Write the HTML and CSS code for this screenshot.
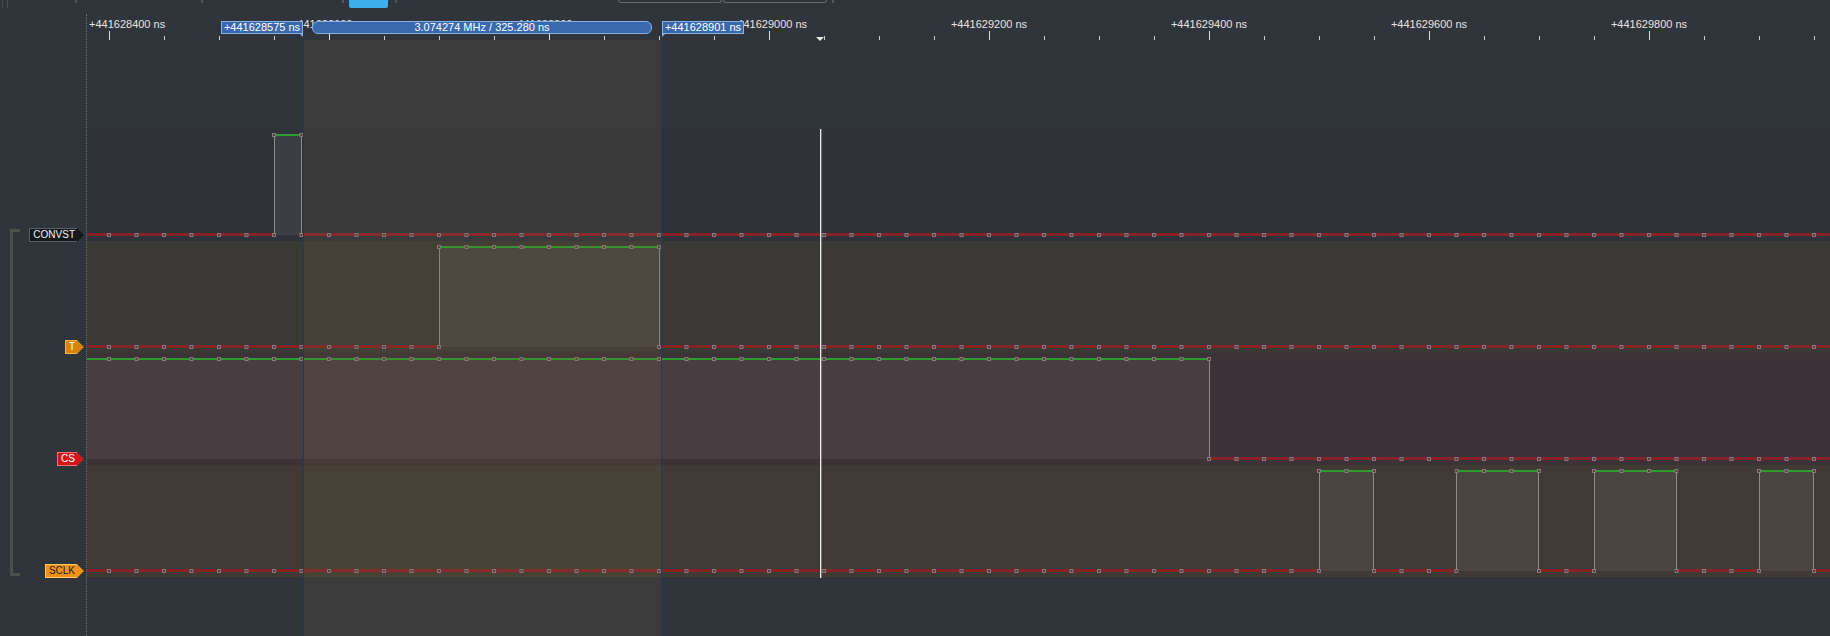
FILE: index.html
```html
<!DOCTYPE html>
<html lang="en">

<head>
    <meta charset="UTF-8">
    <meta name="viewport" content="width=device-width, initial-scale=1.0">
    <title>Logic Analyzer</title>
    <link rel="stylesheet" href="styles.css">
</head>

<body>
    <!-- shared sample-point marker -->
    <svg class="defs" width="0" height="0" aria-hidden="true">
        <defs>
            <pattern id="dots" patternUnits="userSpaceOnUse" x="20" y="4" width="27.5" height="4">
                <rect x="0.5" y="0.5" width="3" height="3" fill="#5a3a3c" stroke="#877b7b" />
            </pattern>
        </defs>
    </svg>

    <!-- bottom edge of the toolbar -->
    <div class="toolbar">
        <span class="grip"></span>
        <span class="stub s1"></span>
        <span class="stub s2"></span>
        <span class="stub s3"></span>
        <span class="tool-btn"></span>
        <span class="stub s4"></span>
        <span class="frame f1"></span>
        <span class="frame f2"></span>
        <span class="stub s5"></span>
    </div>

    <div class="viewer">
        <!-- channel names -->
        <div class="sidebar">
            <div class="bracket"></div>
            <div class="tags">
                <div class="tag-slot"><span class="tag tag-convst">CONVST</span></div>
                <div class="tag-slot"><span class="tag tag-t">T</span></div>
                <div class="tag-slot"><span class="tag tag-cs">CS</span></div>
                <div class="tag-slot"><span class="tag tag-sclk">SCLK</span></div>
            </div>
        </div>

        <div class="plot">
            <!-- time ruler -->
            <div class="ruler">
                <div class="ruler-labels">
                    <span class="tick-label first">+441628400 ns</span>
                    <span class="tick-label">+441628600 ns</span>
                    <span class="tick-label">+441628800 ns</span>
                    <span class="tick-label">+441629000 ns</span>
                    <span class="tick-label">+441629200 ns</span>
                    <span class="tick-label">+441629400 ns</span>
                    <span class="tick-label">+441629600 ns</span>
                    <span class="tick-label">+441629800 ns</span>
                    <span class="tick-label">+441630000 ns</span>
                </div>
                <div class="ticks"></div>

                <div class="marker marker-a">+441628575 ns</div>
                <div class="marker-span">3.074274 MHz / 325.280 ns</div>
                <div class="marker marker-b">+441628901 ns</div>
                <div class="cursor-head"></div>
            </div>

            <!-- traces -->
            <div class="lanes">
                <div class="lane lane-convst">
                    <svg width="1743" height="112" viewBox="0 0 1743 112">
                        <rect class="hi-area" x="187" y="6" width="27.5" height="100" />
                        <rect class="lo" x="0" y="104" width="187" height="3" />
                        <rect class="lo" x="214.5" y="104" width="1528.5" height="3" />
                        <rect class="hi" x="187" y="5" width="27.5" height="2" />
                        <path class="edge" d="M187.5 6V106M214.5 6V106" />
                        <rect fill="url(#dots)" x="-2" y="104" width="191" height="4" />
                        <rect fill="url(#dots)" x="212" y="104" width="1531" height="4" />
                        <rect fill="url(#dots)" x="185" y="4" width="32" height="4" />
                    </svg>
                </div>
                <div class="lane lane-t">
                    <svg width="1743" height="112" viewBox="0 0 1743 112">
                        <rect class="hi-area" x="352" y="6" width="220" height="100" />
                        <rect class="lo" x="0" y="104" width="352" height="3" />
                        <rect class="lo" x="572" y="104" width="1171" height="3" />
                        <rect class="hi" x="352" y="5" width="220" height="2" />
                        <path class="edge" d="M352.5 6V106M572.5 6V106" />
                        <rect fill="url(#dots)" x="-2" y="104" width="356" height="4" />
                        <rect fill="url(#dots)" x="570" y="104" width="1173" height="4" />
                        <rect fill="url(#dots)" x="350" y="4" width="224" height="4" />
                    </svg>
                </div>
                <div class="lane lane-cs">
                    <svg width="1743" height="112" viewBox="0 0 1743 112">
                        <rect class="hi-area" x="0" y="6" width="1122" height="100" />
                        <rect class="hi" x="0" y="5" width="1122" height="2" />
                        <rect class="lo" x="1122" y="104" width="621" height="3" />
                        <path class="edge" d="M1122.5 6V106" />
                        <rect fill="url(#dots)" x="-2" y="4" width="1126" height="4" />
                        <rect fill="url(#dots)" x="1120" y="104" width="623" height="4" />
                    </svg>
                </div>
                <div class="lane lane-sclk">
                    <svg width="1743" height="112" viewBox="0 0 1743 112">
                        <rect class="hi-area" x="1232" y="6" width="55" height="100" />
                        <rect class="hi-area" x="1369.5" y="6" width="82.5" height="100" />
                        <rect class="hi-area" x="1507" y="6" width="82.5" height="100" />
                        <rect class="hi-area" x="1672" y="6" width="55" height="100" />
                        <rect class="lo" x="0" y="104" width="1232" height="3" />
                        <rect class="lo" x="1287" y="104" width="82.5" height="3" />
                        <rect class="lo" x="1452" y="104" width="55" height="3" />
                        <rect class="lo" x="1589.5" y="104" width="82.5" height="3" />
                        <rect class="lo" x="1727" y="104" width="16" height="3" />
                        <rect class="hi" x="1232" y="5" width="55" height="2" />
                        <rect class="hi" x="1369.5" y="5" width="82.5" height="2" />
                        <rect class="hi" x="1507" y="5" width="82.5" height="2" />
                        <rect class="hi" x="1672" y="5" width="55" height="2" />
                        <path class="edge" d="M1232.5 6V106M1286.5 6V106M1369.5 6V106M1451.5 6V106M1507.5 6V106M1589.5 6V106M1672.5 6V106M1726.5 6V106" />
                        <rect fill="url(#dots)" x="-2" y="104" width="1236" height="4" />
                        <rect fill="url(#dots)" x="1285" y="104" width="86.5" height="4" />
                        <rect fill="url(#dots)" x="1450" y="104" width="59" height="4" />
                        <rect fill="url(#dots)" x="1587.5" y="104" width="86.5" height="4" />
                        <rect fill="url(#dots)" x="1725" y="104" width="18" height="4" />
                        <rect fill="url(#dots)" x="1230" y="4" width="59" height="4" />
                        <rect fill="url(#dots)" x="1367.5" y="4" width="86.5" height="4" />
                        <rect fill="url(#dots)" x="1505" y="4" width="86.5" height="4" />
                        <rect fill="url(#dots)" x="1670" y="4" width="59" height="4" />
                    </svg>
                </div>
            </div>

            <!-- time selection between the two markers, and the cursor -->
            <div class="selection"></div>
            <div class="cursor"></div>
        </div>
    </div>
</body>

</html>
```

FILE: styles.css
```css
* {
    margin: 0;
    padding: 0;
}

html,
body {
    width: 1830px;
    height: 636px;
    overflow: hidden;
}

body {
    background: #30343b;
    font-family: "Liberation Sans", Arial, sans-serif;
    color: #e2e2e2;
}

.defs {
    display: block;
}

/* 工具栏底边 */
.toolbar {
    height: 14px;
    display: flex;
    align-items: flex-start;
}

.grip {
    width: 6px;
    height: 8px;
    margin-left: 2px;
    box-sizing: border-box;
    border-left: 1px solid #4b4f55;
    border-right: 1px solid #4b4f55;
}

.stub {
    width: 2px;
    height: 3px;
    background: #52565c;
}

.s1 { margin-left: 67px; }
.s2 { margin-left: 124px; }
.s3 { margin-left: 139px; }
.s4 { margin-left: 7px; }
.s5 { margin-left: 5px; }

.tool-btn {
    width: 39px;
    height: 8px;
    margin-left: 5px;
    background: #3daee9;
    border-radius: 0 0 2px 2px;
}

.frame {
    width: 104px;
    height: 3px;
    box-sizing: border-box;
    border: 1px solid #65686d;
    border-top: 0;
    border-radius: 0 0 3px 3px;
}

.f1 { margin-left: 221px; }
.f2 { margin-left: 1px; }

.viewer {
    display: flex;
    height: 622px;
}

/* 通道名称 */
.sidebar {
    width: 86px;
    flex: none;
    display: flex;
    padding-top: 115px;
    box-sizing: border-box;
}

.bracket {
    flex: none;
    width: 10px;
    height: 347px;
    margin: 100px 0 0 10px;
    box-sizing: border-box;
    border: 3px solid #4c504c;
    border-right: 0;
}

.tags {
    flex: 1;
    display: flex;
    flex-direction: column;
    align-items: flex-end;
    padding-right: 9px;
}

.tag-slot {
    height: 112px;
    display: flex;
    align-items: flex-end;
}

.tag {
    position: relative;
    height: 14px;
    box-sizing: border-box;
    margin-bottom: -1px;
    padding: 0 2px 0 3px;
    border: 1px solid var(--edge);
    border-right: 0;
    background: var(--bg);
    color: var(--ink);
    font-size: 10px;
    line-height: 12px;
}

.tag::after {
    content: "";
    position: absolute;
    left: 100%;
    top: -1px;
    border-top: 7px solid transparent;
    border-bottom: 7px solid transparent;
    border-left: 7px solid var(--bg);
}

.tag-convst { --bg: #15181b; --edge: #5c6065; --ink: #f2f2f2; }
.tag-t { --bg: #d3850f; --edge: #f2b54a; --ink: #ffffff; }
.tag-cs { --bg: #d2161c; --edge: #ff6d6d; --ink: #ffffff; }
.tag-sclk { --bg: #f2921a; --edge: #ffc46a; --ink: #1c1c1c; }

/* 波形区域 */
.plot {
    flex: 1;
    position: relative;
    overflow: hidden;
    border-left: 1px dotted #6d7177;
}

.ruler {
    position: relative;
    height: 26px;
}

.ruler-labels {
    display: flex;
    padding-top: 4px;
    height: 13px;
    font-size: 11px;
    line-height: 13px;
    white-space: nowrap;
    color: #e4e4e4;
}

.tick-label {
    flex: none;
    width: 220px;
    text-align: center;
}

.tick-label.first {
    width: 132px;
    padding-left: 2px;
    box-sizing: border-box;
    text-align: left;
}

/* 刻度：大刻度 220px 一格，小刻度 55px 一格 */
.ticks {
    height: 9px;
    background-image:
        linear-gradient(to right, #dedede 1px, transparent 1px),
        linear-gradient(to right, #cfcfcf 1px, transparent 1px);
    background-size: 220px 9px, 55px 4px;
    background-position: 22px 0, 22px 100%;
    background-repeat: repeat-x;
}

.marker,
.marker-span {
    position: absolute;
    top: 7px;
    height: 13px;
    box-sizing: border-box;
    background: #3968ad;
    border: 1px solid #86b2e6;
    color: #ffffff;
    font-size: 11px;
    line-height: 11px;
    text-align: center;
    white-space: nowrap;
}

.marker::after {
    content: "";
    position: absolute;
    bottom: -4px;
    border-top: 4px solid #86b2e6;
}

.marker-a {
    left: 134px;
    width: 82px;
}

.marker-a::after {
    right: -1px;
    border-left: 4px solid transparent;
}

.marker-b {
    left: 575px;
    width: 82px;
}

.marker-b::after {
    left: -1px;
    border-right: 4px solid transparent;
}

.marker-span {
    left: 225px;
    width: 340px;
    border-radius: 6px;
}

.cursor-head {
    position: absolute;
    left: 729px;
    top: 23px;
    border-top: 4px solid #e8e8e8;
    border-left: 4px solid transparent;
    border-right: 4px solid transparent;
}

.lanes {
    padding-top: 89px;
}

.lane {
    height: 112px;
}

.lane svg {
    display: block;
}

.lane-convst { background: #2f3339; }
.lane-t { background: #3a3935; }
.lane-cs { background: #3d3237; }
.lane-sclk { background: #3f3b34; }

.hi-area { fill: rgba(255, 255, 255, .06); }
.lo { fill: #83232a; }
.hi { fill: #2e9c2e; }
.edge { fill: none; stroke: #8e8b88; stroke-width: 1; }

.selection {
    position: absolute;
    left: 216px;
    top: 26px;
    bottom: 0;
    width: 359px;
    box-sizing: border-box;
    border-left: 1px solid #22395a;
    border-right: 1px solid #22395a;
    background: rgba(125, 100, 70, .15);
}

.cursor {
    position: absolute;
    left: 733px;
    top: 115px;
    width: 1px;
    height: 449px;
    background: #ececec;
    box-shadow: 1px 0 0 rgba(220, 220, 220, .35);
}
```
